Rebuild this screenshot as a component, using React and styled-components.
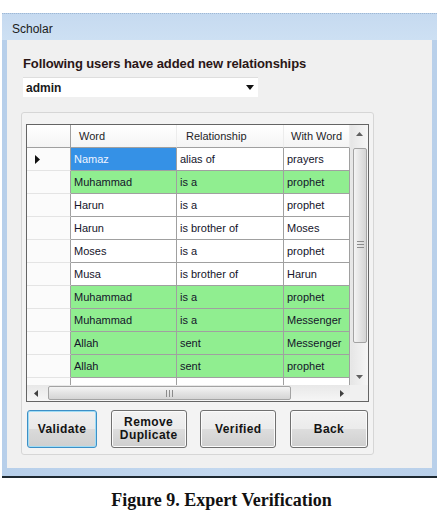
import styled, { createGlobalStyle } from "styled-components";

const GlobalStyle = createGlobalStyle`
  html, body {
    margin: 0;
    padding: 0;
    background: #ffffff;
  }
  body {
    font-family: "Liberation Sans", Arial, sans-serif;
  }
`;

const rows = [
  { word: "Namaz", rel: "alias of", with: "prayers", current: true },
  { word: "Muhammad", rel: "is a", with: "prophet", added: true },
  { word: "Harun", rel: "is a", with: "prophet" },
  { word: "Harun", rel: "is brother of", with: "Moses" },
  { word: "Moses", rel: "is a", with: "prophet" },
  { word: "Musa", rel: "is brother of", with: "Harun" },
  { word: "Muhammad", rel: "is a", with: "prophet", added: true },
  { word: "Muhammad", rel: "is a", with: "Messenger", added: true },
  { word: "Allah", rel: "sent", with: "Messenger", added: true },
  { word: "Allah", rel: "sent", with: "prophet", added: true },
  { word: "", rel: "", with: "" },
];

const columns = [
  { key: "word", title: "Word", width: 106, pad: 8 },
  { key: "rel", title: "Relationship", width: 107, pad: 9 },
  { key: "with", title: "With Word", width: 66, pad: 7 },
];

function App() {
  return (
    <>
      <GlobalStyle />
      <Page>
        <Window>
          <TitleBar>Scholar</TitleBar>
          <Client>
            <Label>Following users have added new relationships</Label>
            <Combo>
              <span>admin</span>
              <svg width="8" height="5" viewBox="0 0 8 5">
                <path d="M0 0h8L4 5z" fill="#111" />
              </svg>
            </Combo>
            <Panel>
              <Grid>
                <Viewport>
                  <Row>
                    <RowHead $header />
                    {columns.map((c) => (
                      <HeadCell key={c.key} $w={c.width} $pad={c.pad}>
                        {c.title}
                      </HeadCell>
                    ))}
                  </Row>
                  {rows.map((r, i) => (
                    <Row key={i}>
                      <RowHead>
                        {r.current && (
                          <svg width="5" height="9" viewBox="0 0 5 9">
                            <path d="M0 0l5 4.5L0 9z" fill="#111" />
                          </svg>
                        )}
                      </RowHead>
                      {columns.map((c, j) => (
                        <Cell
                          key={c.key}
                          $w={c.width}
                          $tone={
                            r.current && j === 0
                              ? "selected"
                              : r.added
                              ? "added"
                              : "plain"
                          }
                        >
                          {r[c.key]}
                        </Cell>
                      ))}
                    </Row>
                  ))}
                </Viewport>
                <VScroll>
                  <ScrollButton>
                    <svg width="7" height="4" viewBox="0 0 7 4">
                      <path d="M0 4L3.5 0 7 4z" fill="#606060" />
                    </svg>
                  </ScrollButton>
                  <VThumb>
                    <Grip $vertical />
                  </VThumb>
                  <Spacer />
                  <ScrollButton>
                    <svg width="7" height="4" viewBox="0 0 7 4">
                      <path d="M0 0h7L3.5 4z" fill="#606060" />
                    </svg>
                  </ScrollButton>
                </VScroll>
                <HScroll>
                  <ScrollButton>
                    <svg width="4" height="7" viewBox="0 0 4 7">
                      <path d="M4 0v7L0 3.5z" fill="#404040" />
                    </svg>
                  </ScrollButton>
                  <HThumb>
                    <Grip />
                  </HThumb>
                  <Spacer />
                  <ScrollButton>
                    <svg width="4" height="7" viewBox="0 0 4 7">
                      <path d="M0 0v7l4-3.5z" fill="#404040" />
                    </svg>
                  </ScrollButton>
                </HScroll>
                <Corner />
              </Grid>
              <Buttons>
                <Button $w={70} $focused>
                  Validate
                </Button>
                <Button $w={76}>
                  Remove
                  <br />
                  Duplicate
                </Button>
                <Button $w={76}>Verified</Button>
                <Button $w={78}>Back</Button>
              </Buttons>
            </Panel>
          </Client>
        </Window>
        <Caption>Figure 9. Expert Verification</Caption>
      </Page>
    </>
  );
}

export default App;

const Page = styled.div`
  width: 443px;
  padding-top: 13px;
`;

const Window = styled.div`
  margin-left: 2px;
  width: 435px;
  display: flex;
  flex-direction: column;
  background: linear-gradient(90deg, #b7cfea, #c3d8ef 50%, #b9d0ea);
  padding: 0 5px 8px;
  box-sizing: border-box;
  border-top: 1px dotted #9fb8d4;
  border-bottom: 2px solid #1d2830;
`;

const TitleBar = styled.div`
  height: 26px;
  margin: 0 -5px;
  padding: 3px 0 0 10px;
  box-sizing: border-box;
  display: flex;
  align-items: center;
  font-size: 12px;
  color: #1b1b1b;
  background: linear-gradient(#c6daf0, #cde0f3);
`;

const Client = styled.div`
  height: 428px;
  background: #f0f0f0;
  padding: 17px 0 0 14px;
  box-sizing: border-box;
  display: flex;
  flex-direction: column;
  align-items: flex-start;
`;

const Label = styled.div`
  margin-left: 2px;
  font-size: 13px;
  line-height: 14px;
  font-weight: bold;
  letter-spacing: -0.1px;
  color: #2a1616;
`;

const Combo = styled.div`
  margin: 6px 0 0 2px;
  width: 235px;
  height: 20px;
  box-sizing: border-box;
  background: #ffffff;
  border-top: 1px solid #dedede;
  display: flex;
  align-items: center;
  justify-content: space-between;
  padding: 0 4px 0 3px;
  font-size: 12px;
  font-weight: bold;
  color: #1a1a1a;
`;

const Panel = styled.div`
  margin-top: 15px;
  width: 353px;
  height: 343px;
  box-sizing: border-box;
  border: 1px solid #d6d6d6;
  border-radius: 3px;
  background: #f3f3f3;
  padding: 11px 4px 0;
`;

const Grid = styled.div`
  width: 343px;
  height: 278px;
  box-sizing: border-box;
  border: 1px solid #646464;
  display: grid;
  grid-template-columns: 323px 18px;
  grid-template-rows: 260px 16px;
  background: #ffffff;
`;

const Viewport = styled.div`
  overflow: hidden;
  display: flex;
  flex-direction: column;
`;

const Row = styled.div`
  display: flex;
  height: 23px;
  flex-shrink: 0;
`;

const RowHead = styled.div`
  width: 44px;
  flex-shrink: 0;
  box-sizing: border-box;
  border-right: 1px solid #a0a0a0;
  border-bottom: 1px solid ${(p) => (p.$header ? "#a0a0a0" : "#e4e4e4")};
  background: ${(p) => (p.$header ? "linear-gradient(#ffffff, #f4f4f4)" : "#fbfbfb")};
  display: flex;
  align-items: center;
  padding-left: 8px;
`;

const HeadCell = styled.div`
  width: ${(p) => p.$w}px;
  flex-shrink: 0;
  box-sizing: border-box;
  padding-left: ${(p) => p.$pad}px;
  border-right: 1px solid #ececec;
  border-bottom: 1px solid #a0a0a0;
  background: linear-gradient(#ffffff, #f4f4f4);
  font-size: 11px;
  color: #1e1e28;
  display: flex;
  align-items: center;
  white-space: nowrap;
  overflow: hidden;
`;

const tones = {
  plain: { bg: "#ffffff", fg: "#14142a" },
  added: { bg: "#90ee90", fg: "#14142a" },
  selected: { bg: "#3591e6", fg: "#eef4ff" },
};

const Cell = styled.div`
  width: ${(p) => p.$w}px;
  flex-shrink: 0;
  box-sizing: border-box;
  padding-left: 3px;
  border-right: 1px solid #a0a0a0;
  border-bottom: 1px solid #a0a0a0;
  background: ${(p) => tones[p.$tone].bg};
  color: ${(p) => tones[p.$tone].fg};
  font-size: 11px;
  display: flex;
  align-items: center;
  white-space: nowrap;
  overflow: hidden;
`;

const VScroll = styled.div`
  display: flex;
  flex-direction: column;
  align-items: stretch;
  background: linear-gradient(90deg, #e6e6e6, #f6f6f6);
  border-left: 1px solid #e8e8e8;
`;

const HScroll = styled.div`
  display: flex;
  align-items: stretch;
  background: linear-gradient(#e8e8e8, #f6f6f6);
`;

const ScrollButton = styled.div`
  flex: 0 0 17px;
  display: flex;
  align-items: center;
  justify-content: center;
`;

const Spacer = styled.div`
  flex: 1;
`;

const VThumb = styled.div`
  margin: 6px 1px 0 2px;
  height: 195px;
  box-sizing: border-box;
  border: 1px solid #a3a3a3;
  border-radius: 2px;
  background: linear-gradient(90deg, #f4f4f4, #e0e0e0 60%, #d4d4d4);
  display: flex;
  align-items: flex-start;
  justify-content: center;
  padding-top: 92px;
`;

const HThumb = styled.div`
  margin: 1px 0 1px 4px;
  width: 243px;
  box-sizing: border-box;
  border: 1px solid #a3a3a3;
  border-radius: 2px;
  background: linear-gradient(#f4f4f4, #e0e0e0 60%, #d4d4d4);
  display: flex;
  align-items: center;
  justify-content: center;
`;

const Grip = styled.div`
  width: 7px;
  height: 7px;
  background: ${(p) =>
    p.$vertical
      ? "repeating-linear-gradient(#8c8c8c 0 1px, transparent 1px 3px)"
      : "repeating-linear-gradient(90deg, #8c8c8c 0 1px, transparent 1px 3px)"};
`;

const Corner = styled.div`
  background: #f0f0f0;
`;

const Buttons = styled.div`
  margin-top: 8px;
  width: 343px;
  padding: 0 1px;
  box-sizing: border-box;
  display: flex;
  justify-content: space-between;
`;

const Button = styled.div`
  width: ${(p) => p.$w}px;
  height: 38px;
  box-sizing: border-box;
  border: 1px solid ${(p) => (p.$focused ? "#3d8fc6" : "#707070")};
  border-radius: 3px;
  box-shadow: inset 0 0 0 1px ${(p) => (p.$focused ? "#9fdcf5" : "#fbfbfb")};
  background: ${(p) =>
    p.$focused
      ? "linear-gradient(#f0f0f0, #e8e8e8 50%, #dadada 51%, #cfcfcf)"
      : "linear-gradient(#f2f2f2, #ebebeb 50%, #dddddd 51%, #cfcfcf)"};
  display: flex;
  align-items: center;
  justify-content: center;
  text-align: center;
  font-size: 12px;
  line-height: 13px;
  font-weight: bold;
  letter-spacing: 0.4px;
  color: #141414;
`;

const Caption = styled.div`
  margin-top: 12px;
  text-align: center;
  font-family: "Liberation Serif", "Times New Roman", serif;
  font-weight: bold;
  font-size: 18px;
  color: #111111;
`;
